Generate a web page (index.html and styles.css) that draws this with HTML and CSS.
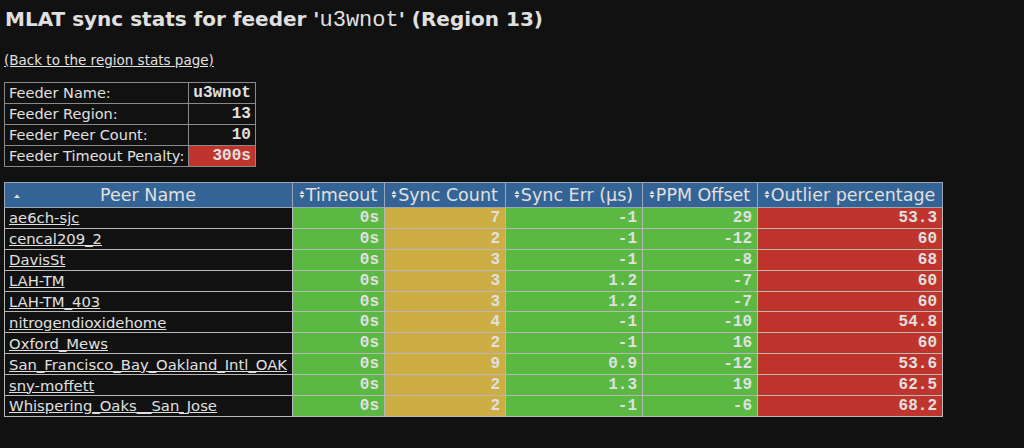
FILE: index.html
```html
<!DOCTYPE html>
<html lang="en">
<head>
  <meta charset="UTF-8">
  <title>MLAT sync stats for u3wnot</title>
  <link rel="stylesheet" href="styles.css">
</head>
<body>

<h2 class="title">MLAT sync stats for feeder '<span class="mono">u3wnot</span>' (Region 13)</h2>

<p class="back"><a href="#">(Back to the region stats page)</a></p>

<table class="info">
  <tr><td>Feeder Name:</td><td class="num">u3wnot</td></tr>
  <tr><td>Feeder Region:</td><td class="num">13</td></tr>
  <tr><td>Feeder Peer Count:</td><td class="num">10</td></tr>
  <tr><td>Feeder Timeout Penalty:</td><td class="num bad">300s</td></tr>
</table>

<table class="peers">
  <thead>
    <tr>
      <th class="col-name"><svg class="sort up" width="6" height="4" viewBox="0 0 6 4"><path d="M0 4 L3 0.5 L6 4Z"/></svg>Peer Name</th>
      <th class="col-timeout"><svg class="sort" width="6" height="9" viewBox="0 0 6 9"><path d="M0.5 4 L3 0.5 L5.5 4Z M0.5 5 L3 8.5 L5.5 5Z"/></svg>Timeout</th>
      <th class="col-count"><svg class="sort" width="6" height="9" viewBox="0 0 6 9"><path d="M0.5 4 L3 0.5 L5.5 4Z M0.5 5 L3 8.5 L5.5 5Z"/></svg>Sync Count</th>
      <th class="col-err"><svg class="sort" width="6" height="9" viewBox="0 0 6 9"><path d="M0.5 4 L3 0.5 L5.5 4Z M0.5 5 L3 8.5 L5.5 5Z"/></svg>Sync Err (µs)</th>
      <th class="col-ppm"><svg class="sort" width="6" height="9" viewBox="0 0 6 9"><path d="M0.5 4 L3 0.5 L5.5 4Z M0.5 5 L3 8.5 L5.5 5Z"/></svg>PPM Offset</th>
      <th class="col-out"><svg class="sort" width="6" height="9" viewBox="0 0 6 9"><path d="M0.5 4 L3 0.5 L5.5 4Z M0.5 5 L3 8.5 L5.5 5Z"/></svg>Outlier percentage</th>
    </tr>
  </thead>
  <tbody>
    <tr><td><a href="#">ae6ch-sjc</a></td><td class="num good">0s</td><td class="num warn">7</td><td class="num good">-1</td><td class="num good">29</td><td class="num bad">53.3</td></tr>
    <tr><td><a href="#">cencal209_2</a></td><td class="num good">0s</td><td class="num warn">2</td><td class="num good">-1</td><td class="num good">-12</td><td class="num bad">60</td></tr>
    <tr><td><a href="#">DavisSt</a></td><td class="num good">0s</td><td class="num warn">3</td><td class="num good">-1</td><td class="num good">-8</td><td class="num bad">68</td></tr>
    <tr><td><a href="#">LAH-TM</a></td><td class="num good">0s</td><td class="num warn">3</td><td class="num good">1.2</td><td class="num good">-7</td><td class="num bad">60</td></tr>
    <tr><td><a href="#">LAH-TM_403</a></td><td class="num good">0s</td><td class="num warn">3</td><td class="num good">1.2</td><td class="num good">-7</td><td class="num bad">60</td></tr>
    <tr><td><a href="#">nitrogendioxidehome</a></td><td class="num good">0s</td><td class="num warn">4</td><td class="num good">-1</td><td class="num good">-10</td><td class="num bad">54.8</td></tr>
    <tr><td><a href="#">Oxford_Mews</a></td><td class="num good">0s</td><td class="num warn">2</td><td class="num good">-1</td><td class="num good">16</td><td class="num bad">60</td></tr>
    <tr><td><a href="#">San_Francisco_Bay_Oakland_Intl_OAK</a></td><td class="num good">0s</td><td class="num warn">9</td><td class="num good">0.9</td><td class="num good">-12</td><td class="num bad">53.6</td></tr>
    <tr><td><a href="#">sny-moffett</a></td><td class="num good">0s</td><td class="num warn">2</td><td class="num good">1.3</td><td class="num good">19</td><td class="num bad">62.5</td></tr>
    <tr><td><a href="#">Whispering_Oaks__San_Jose</a></td><td class="num good">0s</td><td class="num warn">2</td><td class="num good">-1</td><td class="num good">-6</td><td class="num bad">68.2</td></tr>
  </tbody>
</table>

</body>
</html>
```

FILE: styles.css
```css
body {
  margin: 4px;
  background: #111111;
  color: #e0e0e0;
  font-family: "DejaVu Sans", Verdana, sans-serif;
  font-size: 13.5px;
}

a {
  color: #e0e0e0;
}

.title {
  margin: 2px 0 0 1px;
  font-size: 20px;
  line-height: 26px;
  font-weight: bold;
}

.mono {
  font-family: "Liberation Mono", "Courier New", monospace;
  font-weight: normal;
  font-size: 22px;
}

.back {
  margin: 17px 0 0 0;
  line-height: 18px;
}

table {
  border-collapse: collapse;
}

.info {
  margin-top: 13px;
  border: 1px solid #8a8a8a;
}

.info td {
  border: 1px solid #8a8a8a;
  height: 20px;
  padding: 0 4px 0 4px;
  font-size: 14.5px;
}

.num {
  text-align: right;
  font-family: "Liberation Mono", "Courier New", monospace;
  font-weight: bold;
}

.info td.num {
  font-size: 16px;
  padding-right: 4px;
}

.good {
  background: #5ab843;
}

.warn {
  background: #cdae45;
}

.bad {
  background: #c0342e;
}

.peers {
  margin-top: 15px;
  border: 1px solid #8a8a8a;
}

.peers th {
  background: #346496;
  color: #e0e0e0;
  font-weight: normal;
  font-size: 17.5px;
  height: 24px;
  padding: 0 2px 0 1px;
  border: 1px solid #9aa7b8;
  white-space: nowrap;
}

.peers td {
  border: 1px solid #b8b8b8;
  height: 19.9px;
  padding: 0 5px 0 4px;
  font-size: 14.8px;
  white-space: nowrap;
}

.peers td.num {
  font-size: 16px;
  padding-right: 5px;
}

.col-name { width: 283px; }
.col-timeout { width: 88px; }
.col-count { width: 117px; }
.col-err { width: 133px; }
.col-ppm { width: 111px; }
.col-out { width: 181px; }

.col-name {
  position: relative;
}

.sort {
  fill: #e0e0e0;
  margin-right: 1px;
  vertical-align: 2px;
}

.sort.up {
  position: absolute;
  left: 9px;
  top: 11px;
}
```
